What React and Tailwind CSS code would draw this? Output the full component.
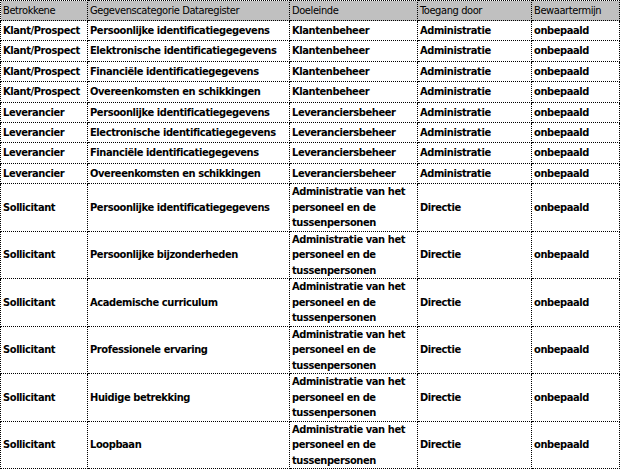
import React from 'react'

const klant = 'Klant/Prospect'
const lev = 'Leverancier'
const sol = 'Sollicitant'
const adm = 'Administratie van het personeel en de tussenpersonen'

const rows = [
  [klant, 'Persoonlijke identificatiegegevens', 'Klantenbeheer', 'Administratie'],
  [klant, 'Elektronische identificatiegegevens', 'Klantenbeheer', 'Administratie'],
  [klant, 'Financiële identificatiegegevens', 'Klantenbeheer', 'Administratie'],
  [klant, 'Overeenkomsten en schikkingen', 'Klantenbeheer', 'Administratie'],
  [lev, 'Persoonlijke identificatiegegevens', 'Leveranciersbeheer', 'Administratie'],
  [lev, 'Electronische identificatiegegevens', 'Leveranciersbeheer', 'Administratie'],
  [lev, 'Financiële identificatiegegevens', 'Leveranciersbeheer', 'Administratie'],
  [lev, 'Overeenkomsten en schikkingen', 'Leveranciersbeheer', 'Administratie'],
  [sol, 'Persoonlijke identificatiegegevens', adm, 'Directie'],
  [sol, 'Persoonlijke bijzonderheden', adm, 'Directie'],
  [sol, 'Academische curriculum', adm, 'Directie'],
  [sol, 'Professionele ervaring', adm, 'Directie'],
  [sol, 'Huidige betrekking', adm, 'Directie'],
  [sol, 'Loopbaan', adm, 'Directie'],
]

const cell = 'border border-dotted border-black px-[2px] align-middle'

export default function App() {
  return (
    <div className="w-[620px] h-[470px] bg-white" style={{ fontFamily: 'Tahoma, "DejaVu Sans Condensed", "Liberation Sans", sans-serif' }}>
      <table className="table-fixed border-collapse w-[619px] text-[11px] leading-[15.5px] text-black tracking-[-0.4px]">
        <colgroup>
          <col className="w-[87px]" />
          <col className="w-[202px]" />
          <col className="w-[128px]" />
          <col className="w-[114px]" />
          <col className="w-[88px]" />
        </colgroup>
        <thead>
          <tr className="h-[20px] bg-[#c0c0c0]">
            {['Betrokkene', 'Gegevenscategorie Dataregister', 'Doeleinde', 'Toegang door', 'Bewaartermijn'].map((h) => (
              <th key={h} className={cell + ' text-left font-normal'}>{h}</th>
            ))}
          </tr>
        </thead>
        <tbody className="font-bold">
          {rows.map((r, i) => (
            <tr key={i} className={i < 8 ? 'h-[20.4px]' : 'h-[47px]'}>
              <td className={cell + ' whitespace-nowrap'}>{r[0]}</td>
              <td className={cell + ' whitespace-nowrap'}>{r[1]}</td>
              <td className={cell}>{r[2]}</td>
              <td className={cell}>{r[3]}</td>
              <td className={cell}>onbepaald</td>
            </tr>
          ))}
        </tbody>
      </table>
    </div>
  )
}
